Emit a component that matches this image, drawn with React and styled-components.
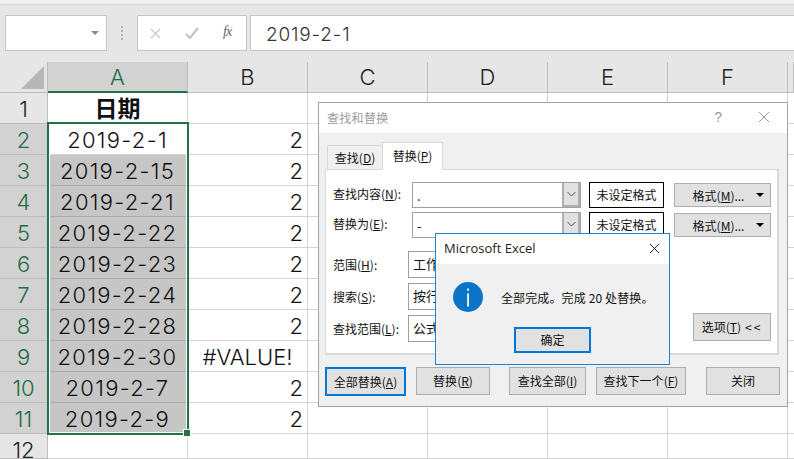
import React from 'react';
import styled, { createGlobalStyle } from 'styled-components';

const Global = createGlobalStyle`
  html, body { margin: 0; padding: 0; width: 794px; height: 459px; overflow: hidden; background: #e6e6e6; }
  * { box-sizing: border-box; }
  body { font-family: "Noto Sans CJK SC", "Noto Sans", sans-serif; color: #111; }
`;
const Page = styled.div`position: relative; width: 794px; height: 459px; overflow: hidden; background: #e6e6e6;`;
const TopEdge = styled.div`height: 5px; border-bottom: 1px solid #d4d4d4; background: #f0f0f0;`;
const FormulaBar = styled.div`
  display: flex; align-items: stretch; height: 36px; margin: 10px 0 11px 5px;
`;
const NameBox = styled.div`
  width: 102px; background: #fff; border: 1px solid #c6c6c6; display: flex; align-items: center; justify-content: flex-end; padding-right: 7px;
`;
const Caret = styled.i`width: 0; height: 0; border-left: 4px solid transparent; border-right: 4px solid transparent; border-top: 4px solid #8a8a8a; display: block;`;
const Dots = styled.div`
  width: 30px; display: flex; flex-direction: column; align-items: center; justify-content: center; gap: 2px;
  & > i { display: block; width: 2px; height: 2px; background: #b0b0b0; }
`;
const FnBox = styled.div`
  width: 110px; background: #fff; border: 1px solid #c6c6c6; display: flex; align-items: center; padding-left: 12px; gap: 24px;
`;
const Fx = styled.span`font: italic 14px "Liberation Serif", serif; color: #666; letter-spacing: -1px; margin-top: -2px;`;
const FormulaInput = styled.div`
  flex: 1; margin-left: 3px; background: #fff; border: 1px solid #c6c6c6; border-right: none; padding-left: 15px;
  font: 300 19px/37px Inter, sans-serif; letter-spacing: .8px; color: #333;
`;
const Sheet = styled.div`
  display: grid; grid-template-columns: 48px 140px 120px 120px 120px 120px 120px 6px;
  grid-template-rows: 31px 31px repeat(10, 31px) 25px;
`;
const Corner = styled.div`
  background: #e6e6e6; border-right: 1px solid #bdbdbd; border-bottom: 1px solid #bdbdbd; position: relative;
  &::after { content: ""; position: absolute; right: 3px; bottom: 3px; width: 0; height: 0; border-left: 23px solid transparent; border-bottom: 23px solid #b7b7b7; }
`;
const ColHead = styled.div`
  background: ${p => p.$active ? '#d2d2d2' : '#e6e6e6'};
  color: ${p => p.$active ? '#1f6b45' : '#222'};
  border-right: 1px solid #bdbdbd;
  border-bottom: ${p => p.$active ? '2px solid #217346' : '1px solid #bdbdbd'};
  font: 300 22px/30px Inter, sans-serif; text-align: center;
`;
const RowHead = styled.div`
  background: ${p => p.$active ? '#d2d2d2' : '#e6e6e6'};
  color: ${p => p.$active ? '#1f6b45' : '#222'};
  border-right: 1px solid #bdbdbd;
  border-bottom: 1px solid #bdbdbd;
  font: 300 22px/33px Inter, sans-serif; text-align: center;
`;
const Cell = styled.div`
  background: ${p => p.$sel ? '#c6c6c6' : '#fff'};
  border-right: 1px solid ${p => p.$sel ? '#aaa' : '#d4d4d4'};
  border-bottom: 1px solid ${p => p.$sel ? '#aaa' : '#d4d4d4'};
  font: 300 22px/33px Inter, sans-serif;
  text-align: ${p => p.$align || 'center'};
  letter-spacing: ${p => p.$tight ? 0 : 1.3}px;
  padding: 0 4px; white-space: nowrap; color: #111;
`;
const HeaderText = styled.span`font: 700 23px/29px "Noto Sans CJK SC", sans-serif; letter-spacing: 0; display: block;`;
const SelBox = styled.div`
  position: absolute; left: 47px; top: 122px; width: 142px; height: 313px; border: 2px solid #217346; pointer-events: none;
  &::before { content: ""; position: absolute; inset: 0; border: 1px solid #fff; }
  &::after { content: ""; position: absolute; right: -4px; bottom: -4px; width: 6px; height: 6px; background: #217346; border: 1px solid #fff; }
`;
const Dialog = styled.div`
  position: absolute; left: 318px; top: 102px; width: 470px; height: 305px; background: #f0f0f0; border: 1px solid #a3a3a3;
  display: flex; flex-direction: column;
`;
const TitleBar = styled.div`
  height: 30px; background: #fff; flex: none; display: flex; align-items: center; padding: 0 17px 2px 8px; color: #9b9b9b; font-size: 12px;
`;
const TitleText = styled.span`flex: 1; letter-spacing: .3px;`;
const Help = styled.span`font: 14px "Liberation Sans", sans-serif; color: #999; margin-right: 36px;`;
const Tabs = styled.div`display: flex; align-items: flex-end; margin: 9px 0 0 8px; height: 28px; position: relative; z-index: 1; font-size: 12px;`;
const Tab = styled.div`
  background: ${p => p.$on ? '#fff' : '#f0f0f0'}; border: 1px solid #d9d9d9; border-bottom: ${p => p.$on ? 'none' : '1px solid #d9d9d9'};
  border-right: ${p => p.$on ? '1px solid #d9d9d9' : 'none'};
  width: ${p => p.$on ? 61 : 55}px; height: ${p => p.$on ? 28 : 25}px; text-align: center; line-height: ${p => p.$on ? 25 : 23}px;
`;
const Panel = styled.div`
  margin: -1px 8px 0 6px; height: 186px; background: #fff; border: 2px solid #d9d9d9; border-width: 1px 2px 2px 1px; padding: 12px 6px 0 7px;
  display: flex; flex-direction: column; font-size: 12px;
`;
const FormRow = styled.div`display: flex; align-items: center; height: 26px; margin-bottom: 4px;`;
const Label = styled.span`width: ${p => p.$w || 79}px; flex: none; white-space: nowrap; padding-bottom: ${p => p.$up || 0}px;`;
const Combo = styled.div`
  width: 169px; height: 26px; border: 1px solid #a0a0a0; display: flex; justify-content: space-between; align-items: center; padding-left: 4px; background: #fff; font-size: 13px; flex: none;
`;
const ComboBtn = styled.div`
  width: 18px; height: 100%; background: #e1e1e1; border: 2px solid #b0b0b0; border-width: 0 2px 2px 2px; display: flex; align-items: center; justify-content: center;
`;
const Preview = styled.div`
  width: 75px; height: 26px; margin-left: 8px; border: 1px solid #000; text-align: center; line-height: 23px; flex: none;
`;
const FormatBtn = styled.div`
  width: 97px; height: 24px; margin-left: 10px; background: #e1e1e1; border: 1px solid #adadad; display: flex; align-items: center; justify-content: center; padding-left: 12px; gap: 12px; flex: none;
`;
const ArrowDown = styled.i`display: block; width: 0; height: 0; border-left: 4px solid transparent; border-right: 4px solid transparent; border-top: 4px solid #000;`;
const OptionRows = styled.div`display: flex; margin-top: 9px; align-items: flex-end; justify-content: space-between;`;
const OptColumn = styled.div`display: flex; flex-direction: column; gap: 5px;`;
const OptRow = styled.div`display: flex; align-items: center; height: 27px;`;
const OptSelect = styled.div`width: 80px; height: 27px; border: 1px solid #a0a0a0; line-height: 24px; padding-left: 4px; font-size: 13px; background: #fff;`;
const OptionsBtn = styled.div`
  width: 78px; height: 28px; margin-bottom: 1px; background: #e1e1e1; border: 1px solid #adadad; text-align: center; line-height: 25px; word-spacing: 1px;
`;
const Chevrons = styled.span`letter-spacing: 2px; margin-left: 4px;`;
const Footer = styled.div`display: flex; margin: 12px 0 0 6px; font-size: 12px;`;
const Btn = styled.div`
  width: ${p => p.$w}px; height: ${p => p.$primary ? 29 : 28}px; margin-left: ${p => p.$gap || 0}px;
  background: #e1e1e1; border: ${p => p.$primary ? '2px solid #0078d7' : '1px solid #adadad'};
  text-align: center; line-height: ${p => p.$primary ? 25 : 26}px; white-space: nowrap; flex: none;
`;
const MsgBox = styled.div`
  position: absolute; left: 435px; top: 233px; width: 235px; height: 132px; background: #f0f0f0; border: 1px solid #1883d7; display: flex; flex-direction: column;
`;
const MsgTitle = styled.div`
  height: 30px; background: #fff; display: flex; align-items: center; justify-content: space-between; padding: 0 9px 2px 8px; font: 13px "Open Sans", sans-serif; color: #222; flex: none;
`;
const MsgBody = styled.div`display: flex; align-items: center; gap: 18px; padding: 18px 0 0 17px; font-size: 12px; letter-spacing: .12px;`;
const MsgFoot = styled.div`display: flex; justify-content: center; margin-top: 15px;`;
const OkBtn = styled.div`
  width: 77px; height: 26px; background: #e1e1e1; border: 2px solid #0078d7; text-align: center; line-height: 21px; font-size: 12px;
`;
const U = styled.span`text-decoration: underline; text-underline-offset: 1px;`;

const dates = ['2019-2-1','2019-2-15','2019-2-21','2019-2-22','2019-2-23','2019-2-24','2019-2-28','2019-2-30','2019-2-7','2019-2-9'];
const cols = ['A','B','C','D','E','F'];
const Key = ({ c }) => <>(<U>{c}</U>)</>;
const X = ({ s = 12, c = '#999', w = 1 }) => (
  <svg width={s} height={s} viewBox="0 0 12 12" style={{ flex: 'none' }}>
    <path d="M1 1L11 11M11 1L1 11" stroke={c} strokeWidth={w} fill="none" />
  </svg>
);
const Chevron = () => (
  <svg width="9" height="6" viewBox="0 0 9 6"><path d="M.5 1L4.5 5L8.5 1" stroke="#555" fill="none" /></svg>
);
const Check = () => (
  <svg width="14" height="12" viewBox="0 0 14 12"><path d="M1 7L5 11L13 1" stroke="#c4c4c4" strokeWidth="2.2" fill="none" /></svg>
);
const Info = () => (
  <svg width="30" height="30" viewBox="0 0 30 30" style={{ flex: 'none' }}>
    <circle cx="15" cy="15" r="15" fill="#0a74c9" />
    <rect x="14.2" y="6.5" width="1.8" height="2.2" fill="#fff" />
    <rect x="14.2" y="11.5" width="1.8" height="13" fill="#fff" />
  </svg>
);

export default function App() {
  return (
    <Page>
      <Global />
      <TopEdge />
      <FormulaBar>
        <NameBox><Caret /></NameBox>
        <Dots><i /><i /><i /><i /></Dots>
        <FnBox><X s={11} c="#c4c4c4" w={1.4} /><Check /><Fx>fx</Fx></FnBox>
        <FormulaInput>2019-2-1</FormulaInput>
      </FormulaBar>
      <Sheet>
        <Corner />
        {cols.map((c, i) => <ColHead key={c} $active={i === 0}>{c}</ColHead>)}
        <ColHead />
        <RowHead>1</RowHead>
        <Cell><HeaderText>日期</HeaderText></Cell>
        {cols.slice(1).map(c => <Cell key={c} />)}
        <Cell />
        {dates.map((d, i) => (
          <React.Fragment key={d}>
            <RowHead $active>{i + 2}</RowHead>
            <Cell $sel={i > 0}>{d}</Cell>
            <Cell $tight $align={i === 7 ? 'center' : 'right'}>{i === 7 ? '#VALUE!' : '2'}</Cell>
            {cols.slice(2).map(c => <Cell key={c} />)}
            <Cell />
          </React.Fragment>
        ))}
        <RowHead>12</RowHead>
        <Cell /><Cell />
        {cols.slice(2).map(c => <Cell key={c} />)}
        <Cell />
      </Sheet>
      <SelBox />
      <Dialog>
        <TitleBar><TitleText>查找和替换</TitleText><Help>?</Help><X /></TitleBar>
        <Tabs>
          <Tab>查找<Key c="D" /></Tab>
          <Tab $on>替换<Key c="P" /></Tab>
        </Tabs>
        <Panel>
          <FormRow>
            <Label $up={3}>查找内容<Key c="N" />:</Label>
            <Combo>.<ComboBtn><Chevron /></ComboBtn></Combo>
            <Preview>未设定格式</Preview>
            <FormatBtn><span>格式<Key c="M" />...</span><ArrowDown /></FormatBtn>
          </FormRow>
          <FormRow>
            <Label $up={3}>替换为<Key c="E" />:</Label>
            <Combo>-<ComboBtn><Chevron /></ComboBtn></Combo>
            <Preview>未设定格式</Preview>
            <FormatBtn><span>格式<Key c="M" />...</span><ArrowDown /></FormatBtn>
          </FormRow>
          <OptionRows>
            <OptColumn>
              <OptRow><Label $w={75}>范围<Key c="H" />:</Label><OptSelect>工作表</OptSelect></OptRow>
              <OptRow><Label $w={75}>搜索<Key c="S" />:</Label><OptSelect>按行</OptSelect></OptRow>
              <OptRow><Label $w={75}>查找范围<Key c="L" />:</Label><OptSelect>公式</OptSelect></OptRow>
            </OptColumn>
            <OptionsBtn>选项<Key c="T" /><Chevrons>&lt;&lt;</Chevrons></OptionsBtn>
          </OptionRows>
        </Panel>
        <Footer>
          <Btn $primary $w={81}>全部替换<Key c="A" /></Btn>
          <Btn $w={74} $gap={10}>替换<Key c="R" /></Btn>
          <Btn $w={77} $gap={19}>查找全部<Key c="I" /></Btn>
          <Btn $w={90} $gap={10}>查找下一个<Key c="F" /></Btn>
          <Btn $w={74} $gap={20}>关闭</Btn>
        </Footer>
      </Dialog>
      <MsgBox>
        <MsgTitle>Microsoft Excel<X s={11} c="#111" /></MsgTitle>
        <MsgBody><Info /><span>全部完成。完成 20 处替换。</span></MsgBody>
        <MsgFoot><OkBtn>确定</OkBtn></MsgFoot>
      </MsgBox>
    </Page>
  );
}
